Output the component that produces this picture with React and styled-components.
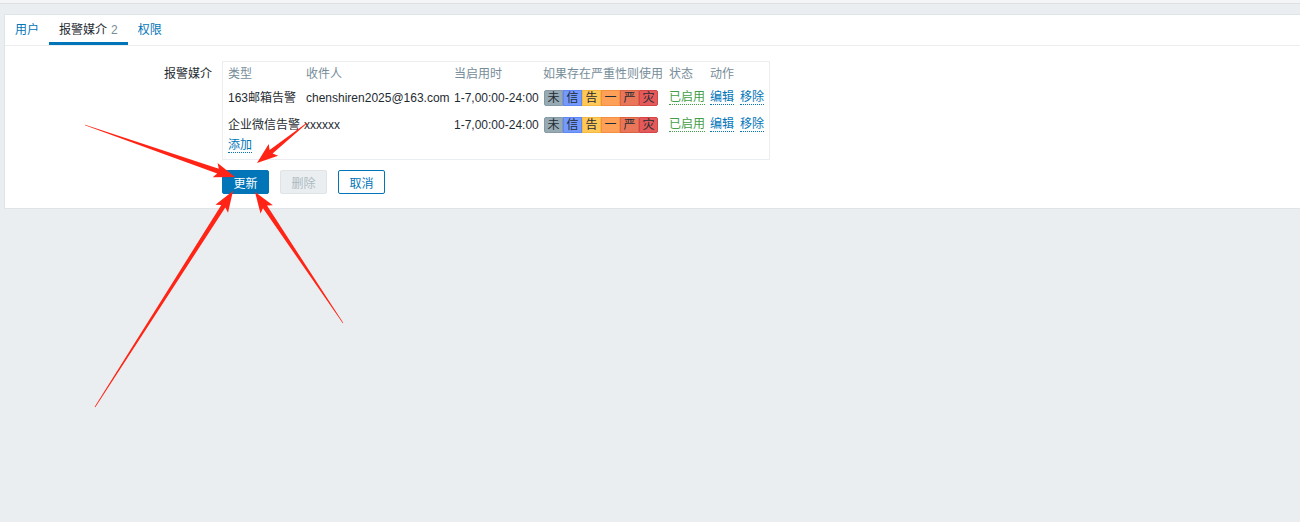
import React from 'react';
import styled, { createGlobalStyle } from 'styled-components';

const GlobalStyle = createGlobalStyle`
  html, body {
    margin: 0;
    padding: 0;
    background: #ebeef0;
  }
  body {
    font-family: "Liberation Sans", Arial, "Noto Sans CJK SC", sans-serif;
    font-size: 12px;
    color: #1f2c33;
  }
`;

const Page = styled.div`
  position: relative;
  width: 1300px;
  height: 522px;
  overflow: hidden;
  background: #ebeef0;
`;

const TopStrip = styled.div`
  height: 3px;
  background: #f4f5f6;
  border-bottom: 1px solid #dde1e4;
`;

const Panel = styled.div`
  margin: 10px 0 0 4px;
  background: #fff;
  border: 1px solid #dfe4e7;
  border-right: none;
  padding-bottom: 14px;
`;

const TabBar = styled.div`
  display: flex;
  border-bottom: 1px solid #ebeef0;
`;

const Tab = styled.div`
  box-sizing: border-box;
  height: 30px;
  padding: 2px 10px 0;
  display: flex;
  align-items: center;
  color: ${p => (p.$active ? '#1f2c33' : '#0275b8')};
  border-bottom: 3px solid ${p => (p.$active ? '#0275b8' : 'transparent')};
  line-height: 14px;
`;

const Count = styled.span`
  color: #768d99;
  margin-left: 4px;
`;

const Form = styled.div`
  display: grid;
  grid-template-columns: 207px auto;
  column-gap: 10px;
  padding-top: 15px;
`;

const Label = styled.div`
  text-align: right;
  padding-top: 6px;
  line-height: 14px;
`;

const TableBox = styled.div`
  width: 536px;
  border: 1px solid #ebeef0;
  padding: 0 5px 6px;
`;

const Row = styled.div`
  display: grid;
  grid-template-columns: 78px 148px 89px 126px 41px auto;
  align-items: center;
  height: ${p => (p.$head ? '22px' : '27px')};
  padding-top: ${p => (p.$head ? '1px' : '0')};
  box-sizing: border-box;
  color: ${p => (p.$head ? '#768d99' : '#1f2c33')};
  line-height: 14px;
  white-space: nowrap;
`;

const Cell = styled.div`
  margin-left: ${p => p.$shift || 0}px;
`;

const Chips = styled.div`
  display: flex;
  margin-left: 1px;
`;

const Chip = styled.span`
  box-sizing: border-box;
  width: 19px;
  height: 16px;
  display: flex;
  align-items: center;
  justify-content: center;
  background: ${p => p.$bg};
  border: 1px solid ${p => p.$bd};
  color: #1f2c33;
  font-size: 12px;
  &:first-child {
    border-radius: 2px 0 0 2px;
  }
  &:last-child {
    border-radius: 0 2px 2px 0;
  }
`;

const Link = styled.span`
  color: ${p => (p.$green ? '#429e47' : '#0275b8')};
  border-bottom: 1px dotted ${p => (p.$green ? '#429e47' : '#0275b8')};
  margin-right: ${p => p.$gap || 0}px;
  line-height: 13px;
  display: inline-block;
`;

const AddRow = styled.div`
  line-height: 14px;
`;

const Actions = styled.div`
  grid-column: 2;
  display: flex;
  gap: 11px;
  margin-top: 10px;
`;

const Button = styled.button`
  box-sizing: border-box;
  height: 24px;
  width: 47px;
  padding: 0;
  font: inherit;
  border-radius: 2px;
  border: 1px solid ${p => (p.$variant === 'disabled' ? '#dfe4e7' : '#0275b8')};
  background: ${p =>
    p.$variant === 'primary' ? '#0275b8' : p.$variant === 'disabled' ? '#ebeef0' : '#fff'};
  color: ${p =>
    p.$variant === 'primary' ? '#fff' : p.$variant === 'disabled' ? '#acbbc2' : '#0275b8'};
`;

const Overlay = styled.svg`
  position: absolute;
  left: 0;
  top: 0;
  pointer-events: none;
`;

const severities = [
  { t: '未', bg: '#97aab3', bd: '#859aa4' },
  { t: '信', bg: '#7499ff', bd: '#5f88f5' },
  { t: '告', bg: '#ffc859', bd: '#f5b93f' },
  { t: '一', bg: '#ffa059', bd: '#f58f42' },
  { t: '严', bg: '#e97659', bd: '#dc6446' },
  { t: '灾', bg: '#e45959', bd: '#d44545' },
];

const media = [
  { type: '163邮箱告警', to: 'chenshiren2025@163.com', shift: 0 },
  { type: '企业微信告警', to: 'xxxxxx', shift: -2 },
];

// tail x, tail y, tip x, tip y
const arrows = [
  [85, 125, 235, 177],
  [307, 123, 257, 163],
  [95, 407, 233, 191],
  [343, 323, 255, 192],
];

function arrowPoints([tx, ty, px, py]) {
  const dx = px - tx;
  const dy = py - ty;
  const len = Math.hypot(dx, dy);
  const ux = dx / len;
  const uy = dy / len;
  const nx = -uy;
  const ny = ux;
  const L = 18;
  const bx = px - ux * L;
  const by = py - uy * L;
  const pts = [
    [tx + nx * 0.3, ty + ny * 0.3],
    [bx + nx * 2.4, by + ny * 2.4],
    [bx - ux * 3 + nx * 7.5, by - uy * 3 + ny * 7.5],
    [px, py],
    [bx - ux * 3 - nx * 7.5, by - uy * 3 - ny * 7.5],
    [bx - nx * 2.4, by - ny * 2.4],
    [tx - nx * 0.3, ty - ny * 0.3],
  ];
  return pts.map(p => p.map(v => v.toFixed(1)).join(',')).join(' ');
}

export default function App() {
  return (
    <Page>
      <GlobalStyle />
      <TopStrip />
      <Panel>
        <TabBar>
          <Tab>用户</Tab>
          <Tab $active>
            报警媒介<Count>2</Count>
          </Tab>
          <Tab>权限</Tab>
        </TabBar>
        <Form>
          <Label>报警媒介</Label>
          <TableBox>
            <Row $head>
              <Cell>类型</Cell>
              <Cell>收件人</Cell>
              <Cell>当启用时</Cell>
              <Cell>如果存在严重性则使用</Cell>
              <Cell>状态</Cell>
              <Cell>动作</Cell>
            </Row>
            {media.map(m => (
              <Row key={m.type}>
                <Cell>{m.type}</Cell>
                <Cell $shift={m.shift}>{m.to}</Cell>
                <Cell>1-7,00:00-24:00</Cell>
                <Chips>
                  {severities.map(s => (
                    <Chip key={s.t} $bg={s.bg} $bd={s.bd}>
                      {s.t}
                    </Chip>
                  ))}
                </Chips>
                <Cell>
                  <Link $green>已启用</Link>
                </Cell>
                <Cell>
                  <Link $gap={6}>编辑</Link>
                  <Link>移除</Link>
                </Cell>
              </Row>
            ))}
            <AddRow>
              <Link>添加</Link>
            </AddRow>
          </TableBox>
          <Actions>
            <Button $variant="primary">更新</Button>
            <Button $variant="disabled">删除</Button>
            <Button>取消</Button>
          </Actions>
        </Form>
      </Panel>
      <Overlay width="1300" height="522" viewBox="0 0 1300 522">
        {arrows.map((a, i) => (
          <polygon key={i} points={arrowPoints(a)} fill="#ff2415" />
        ))}
      </Overlay>
    </Page>
  );
}
